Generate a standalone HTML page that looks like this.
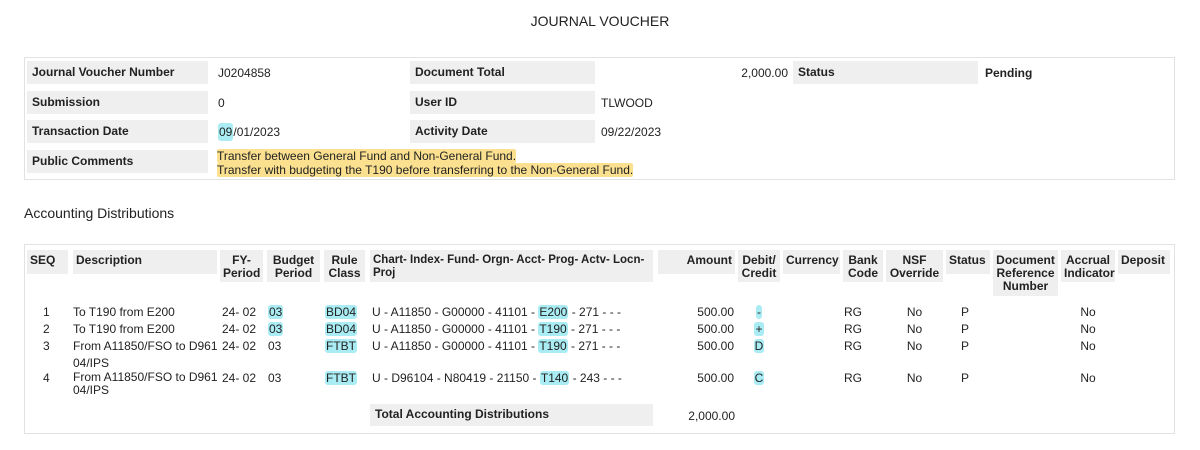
<!DOCTYPE html>
<html><head><meta charset="utf-8"><style>
body{margin:0;width:1200px;height:450px;background:#fff;font-family:"Liberation Sans",sans-serif;font-size:12px;color:#222;position:relative;overflow:hidden}
div,span.a{position:absolute}
.box{border:1px solid #e2e2e2}
.l{background:#efefef;font-weight:bold;padding:0 0 0 5px;box-sizing:border-box;line-height:14px}
.h{background:#efefef;font-weight:bold;box-sizing:border-box;line-height:13px;padding:4px 3px 0 3px}
.c{background:#a9ecf3;border-radius:3px;padding:0 1px}
.y{background:#fbe08f;border-radius:2px}
.r{text-align:right}.m{text-align:center}
</style></head><body>
<div style="left:0;top:13px;width:1200px;text-align:center;font-size:14px">JOURNAL VOUCHER</div>

<div class="box" style="left:24px;top:57px;width:1149px;height:121px"></div>
<div class="l" style="left:27px;top:61px;width:181px;height:23px;line-height:22px">Journal Voucher Number</div>
<div style="left:218px;top:66px">J0204858</div>
<div class="l" style="left:410px;top:61px;width:185px;height:23px;line-height:22px">Document Total</div>
<div class="r" style="left:700px;top:66px;width:88px">2,000.00</div>
<div class="l" style="left:793px;top:61px;width:185px;height:23px;line-height:22px">Status</div>
<div style="left:985px;top:66px;font-weight:bold">Pending</div>

<div class="l" style="left:27px;top:91px;width:181px;height:23px;line-height:22px">Submission</div>
<div style="left:218px;top:96px">0</div>
<div class="l" style="left:410px;top:91px;width:185px;height:23px;line-height:22px">User ID</div>
<div style="left:601px;top:96px">TLWOOD</div>

<div class="l" style="left:27px;top:120px;width:181px;height:23px;line-height:22px">Transaction Date</div>
<div style="left:218px;top:125px"><span class="c" style="padding:2px 1px">09</span>/01/2023</div>
<div class="l" style="left:410px;top:120px;width:185px;height:23px;line-height:22px">Activity Date</div>
<div style="left:601px;top:125px">09/22/2023</div>

<div class="l" style="left:27px;top:150px;width:181px;height:23px;line-height:22px">Public Comments</div>
<div style="left:217px;top:149px;line-height:14px"><span class="y">Transfer between General Fund and Non-General Fund.</span><br><span class="y">Transfer with budgeting the T190 before transferring to the Non-General Fund.</span></div>

<div style="left:24px;top:205px;font-size:14px">Accounting Distributions</div>

<div class="box" style="left:24px;top:244px;width:1149px;height:188px"></div>
<div class="h" style="left:27px;top:250px;width:41px;height:24px">SEQ</div>
<div class="h" style="left:73px;top:250px;width:144px;height:24px">Description</div>
<div class="h m" style="left:220px;top:250px;width:43px;height:32px">FY-<br>Period</div>
<div class="h m" style="left:267px;top:250px;width:53px;height:32px">Budget<br>Period</div>
<div class="h m" style="left:324px;top:250px;width:41px;height:32px">Rule<br>Class</div>
<div class="h" style="left:370px;top:250px;width:283px;height:32px;white-space:nowrap;font-size:11.5px">Chart- Index- Fund- Orgn- Acct- Prog- Actv- Locn-<br>Proj</div>
<div class="h r" style="left:658px;top:250px;width:77px;height:24px">Amount</div>
<div class="h m" style="left:738px;top:250px;width:42px;height:32px">Debit/<br>Credit</div>
<div class="h" style="left:783px;top:250px;width:57px;height:24px">Currency</div>
<div class="h m" style="left:843px;top:250px;width:40px;height:32px">Bank<br>Code</div>
<div class="h m" style="left:886px;top:250px;width:57px;height:32px">NSF<br>Override</div>
<div class="h" style="left:946px;top:250px;width:44px;height:24px">Status</div>
<div class="h m" style="left:993px;top:250px;width:65px;height:46px">Document<br>Reference<br>Number</div>
<div class="h m" style="left:1061px;top:250px;width:54px;height:32px">Accrual<br>Indicator</div>
<div class="h" style="left:1118px;top:250px;width:52px;height:24px">Deposit</div>

<div style="left:43px;top:304px;line-height:17px">1<br>2<br>3</div>
<div style="left:43px;top:371px">4</div>
<div style="left:73px;top:304px;line-height:17px">To T190 from E200<br>To T190 from E200<br>From A11850/FSO to D961</div>
<div style="left:73px;top:357px;line-height:13px">04/IPS</div>
<div style="left:73px;top:371px;line-height:13px">From A11850/FSO to D961<br>04/IPS</div>
<div style="left:222px;top:304px;line-height:17px">24- 02<br>24- 02<br>24- 02</div>
<div style="left:222px;top:371px">24- 02</div>
<div style="left:268px;top:304px;line-height:17px"><span class="c">03</span><br><span class="c">03</span><br>03</div>
<div style="left:268px;top:371px">03</div>
<div style="left:325px;top:304px;line-height:17px"><span class="c">BD04</span><br><span class="c">BD04</span><br><span class="c">FTBT</span></div>
<div style="left:325px;top:371px"><span class="c">FTBT</span></div>
<div style="left:372px;top:304px;line-height:17px">U - A11850 - G00000 - 41101 - <span class="c">E200</span> - 271 - - -<br>U - A11850 - G00000 - 41101 - <span class="c">T190</span> - 271 - - -<br>U - A11850 - G00000 - 41101 - <span class="c">T190</span> - 271 - - -</div>
<div style="left:372px;top:371px">U - D96104 - N80419 - 21150 - <span class="c">T140</span> - 243 - - -</div>
<div class="r" style="left:658px;top:304px;width:76px;line-height:17px">500.00<br>500.00<br>500.00</div>
<div class="r" style="left:658px;top:371px;width:76px">500.00</div>
<div class="m" style="left:738px;top:304px;width:42px;line-height:17px"><span class="c">-</span><br><span class="c">+</span><br><span class="c">D</span></div>
<div class="m" style="left:738px;top:371px;width:42px"><span class="c">C</span></div>
<div class="m" style="left:843px;top:304px;width:20px;line-height:17px">RG<br>RG<br>RG</div>
<div class="m" style="left:843px;top:371px;width:20px">RG</div>
<div class="m" style="left:886px;top:304px;width:57px;line-height:17px">No<br>No<br>No</div>
<div class="m" style="left:886px;top:371px;width:57px">No</div>
<div style="left:961px;top:304px;line-height:17px">P<br>P<br>P</div>
<div style="left:961px;top:371px">P</div>
<div class="m" style="left:1061px;top:304px;width:54px;line-height:17px">No<br>No<br>No</div>
<div class="m" style="left:1061px;top:371px;width:54px">No</div>

<div class="l" style="left:370px;top:404px;width:283px;height:22px;line-height:21px">Total Accounting Distributions</div>
<div class="r" style="left:658px;top:409px;width:77px">2,000.00</div>
</body></html>
